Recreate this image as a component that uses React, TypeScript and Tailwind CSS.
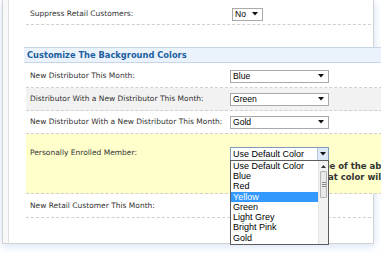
import React from 'react';

const label = "font-['DejaVu_Sans',Verdana,sans-serif] text-[7.5px] text-[#333]";
const selectFont = "font-['Liberation_Sans',Arial,sans-serif] text-[8.6px] text-black";

function Arrow() {
  return (
    <svg width="6" height="4" viewBox="0 0 6 4" className="shrink-0">
      <polygon points="0,0 6,0 3,3.5" fill="#111" />
    </svg>
  );
}

function Select({ value, width }: { value: string; width: string }) {
  return (
    <div
      className={`flex h-[13px] items-center justify-between border border-[#a9a9a9] bg-white pl-[2px] pr-[4px] leading-none ${selectFont} ${width}`}
    >
      <span>{value}</span>
      <Arrow />
    </div>
  );
}

const colors = ['Use Default Color', 'Blue', 'Red', 'Yellow', 'Green', 'Light Grey', 'Bright Pink', 'Gold'];

function OpenSelect() {
  return (
    <div className="relative w-[99px]">
      <div className={`flex h-[14px] items-center border border-[#7f9db9] bg-white leading-none ${selectFont}`}>
        <span className="flex-1 pl-[2px] text-[9px]">Use Default Color</span>
        <div className="flex h-full w-[11px] items-center justify-center border-l border-[#b8c8dc] bg-[#dfe9f6]">
          <Arrow />
        </div>
      </div>
      {/* dropdown list */}
      <div className="absolute left-0 top-[13px] z-30 flex h-[85px] w-[99px] overflow-hidden border border-[#5c5c5c] bg-white">
        <div className="flex-1">
          {colors.map((c) => (
            <div
              key={c}
              className={`flex h-[10.3px] items-center pl-[2px] leading-none ${selectFont} text-[9px] ${c === 'Yellow' ? 'bg-[#3399ff] text-white' : ''}`}
            >
              {c}
            </div>
          ))}
        </div>
        <div className="flex w-[10px] flex-col border-l border-[#e4e4e4] bg-[#f2f2f2]">
          <div className="flex h-[10px] items-center justify-center">
            <svg width="5" height="3" viewBox="0 0 5 3">
              <polygon points="0,3 5,3 2.5,0" fill="#333" />
            </svg>
          </div>
          <div className="mx-[1px] flex h-[27px] flex-col items-center justify-center gap-[1px] rounded-[1px] border border-[#b5b5b5] bg-[#e9e9e9]">
            <div className="h-px w-[4px] bg-[#888]" />
            <div className="h-px w-[4px] bg-[#888]" />
            <div className="h-px w-[4px] bg-[#888]" />
          </div>
        </div>
      </div>
    </div>
  );
}

function Row({ text, children, className = '' }: { text: string; children: React.ReactNode; className?: string }) {
  return (
    <div className={`ml-[2px] flex items-center border-b border-dashed border-[#cfcfcf] pl-[4px] ${className}`}>
      <div className={`w-[200px] ${label}`}>{text}</div>
      {children}
    </div>
  );
}

export default function App() {
  return (
    <div className="relative h-[253px] w-[381px] overflow-hidden bg-white">
      <div className="ml-[2px] flex h-[244px] w-[372px] border border-t-0 border-[#d2d2d2] bg-white shadow-[0_2px_9px_rgba(130,170,225,0.35)]">
        <div className="w-[6px] border-r border-[#e0e0e0] bg-[#f8f8f8]" />
        <div className="flex-1 pl-[15px]">
          <Row text="Suppress Retail Customers:" className="mr-[2px] h-[25px] pt-[4px]">
            <div className="ml-[2px]">
              <Select value="No" width="w-[31px]" />
            </div>
          </Row>
          <div className="h-[22px]" />

          <div className="relative z-10 mr-[-9px]">
            <div className="flex h-[16px] items-center border-y border-[#c9d5e4] bg-[#eaf2fb] pl-[3px] font-['DejaVu_Sans',Verdana,sans-serif] text-[8.3px] font-bold text-[#1d5f9f]">
              Customize The Background Colors
            </div>
            <Row text="New Distributor This Month:" className="h-[25px] bg-white pt-[2px]">
              <Select value="Blue" width="w-[99px]" />
            </Row>
            <Row text="Distributor With a New Distributor This Month:" className="h-[23px] bg-[#f2f2f2]">
              <Select value="Green" width="w-[99px]" />
            </Row>
            <Row text="New Distributor With a New Distributor This Month:" className="h-[23px] bg-white">
              <Select value="Gold" width="w-[99px]" />
            </Row>
            <Row text="Personally Enrolled Member:" className="relative h-[60px] items-start bg-[#ffffcc] pt-[13px]">
              <OpenSelect />
              <div className="absolute left-[259px] top-[27px] whitespace-nowrap font-['DejaVu_Sans',Verdana,sans-serif] text-[8.5px] font-bold leading-[11px] text-[#333]">
                <div>Select one of the above colors</div>
                <div className="pl-[12px]">and that color will be used</div>
              </div>
            </Row>
          </div>
          <Row text="New Retail Customer This Month:" className="mr-[2px] h-[24px]">
            <span />
          </Row>
        </div>
      </div>
    </div>
  );
}
